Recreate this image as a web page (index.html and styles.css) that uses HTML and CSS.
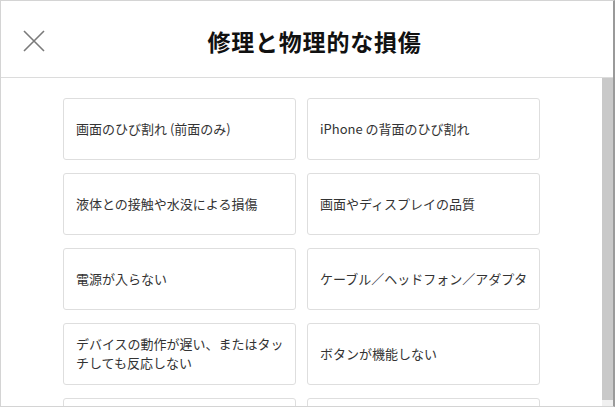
FILE: index.html
```html
<!DOCTYPE html>
<html lang="ja">
<head>
<meta charset="utf-8">
<link rel="stylesheet" href="styles.css">
</head>
<body>
<div class="frame">
  <header class="header">
    <button class="close" aria-label="閉じる">
      <svg width="22" height="22" viewBox="0 0 22 22"><path d="M1 1L21 21M21 1L1 21" stroke="#7a7a7a" stroke-width="1.6" fill="none"/></svg>
    </button>
    <h1 class="title">修理と物理的な損傷</h1>
  </header>
  <div class="body">
    <div class="content">
      <div class="grid">
        <div class="card">画面のひび割れ (前面のみ)</div>
        <div class="card">iPhone の背面のひび割れ</div>
        <div class="card">液体との接触や水没による損傷</div>
        <div class="card">画面やディスプレイの品質</div>
        <div class="card">電源が入らない</div>
        <div class="card">ケーブル／ヘッドフォン／アダプタ</div>
        <div class="card">デバイスの動作が遅い、またはタッチしても反応しない</div>
        <div class="card">ボタンが機能しない</div>
        <div class="card"></div>
        <div class="card"></div>
      </div>
    </div>
    <div class="scrollbar"><div class="thumb"></div></div>
  </div>
</div>
</body>
</html>
```
FILE: styles.css
```css
html, body {
  margin: 0;
  padding: 0;
  background: #fff;
}
body {
  width: 615px;
  height: 408px;
  overflow: hidden;
  font-family: "Noto Sans CJK JP", "Liberation Sans", sans-serif;
  color: #333;
}
.frame {
  box-sizing: border-box;
  width: 615px;
  height: 407px;
  border: 1px solid #d4d4d4;
  border-right: 2px solid #9a9a9a;
  display: flex;
  flex-direction: column;
  overflow: hidden;
}
.header {
  flex: 0 0 auto;
  height: 76px;
  border-bottom: 1px solid #dcdcdc;
  display: flex;
  align-items: center;
  justify-content: center;
  position: relative;
  padding-left: 15px;
}
.close {
  position: absolute;
  left: 22px;
  top: 29px;
  width: 22px;
  height: 22px;
  padding: 0;
  border: 0;
  background: none;
  display: block;
}
.close svg { display: block; }
.title {
  margin: 0;
  font-size: 23px;
  font-weight: 700;
  color: #111;
  letter-spacing: 0.8px;
  line-height: 30px;
  padding-top: 3px;
}
.body {
  flex: 1 1 auto;
  display: flex;
  min-height: 0;
}
.content {
  flex: 1 1 auto;
  overflow: hidden;
  padding-top: 20px;
  display: flex;
  justify-content: center;
}
.grid {
  display: grid;
  grid-template-columns: 233px 233px;
  grid-auto-rows: 62px;
  column-gap: 11px;
  row-gap: 13px;
  align-content: start;
}
.card {
  box-sizing: border-box;
  border: 1px solid #dedede;
  border-radius: 3px;
  padding: 0 10px 2px 12px;
  display: flex;
  align-items: center;
  font-size: 13px;
  line-height: 19px;
  color: #333;
}
.scrollbar {
  flex: 0 0 11px;
  background: #f0f0f0;
  display: flex;
  padding-bottom: 6px;
}
.thumb {
  flex: 1;
  background: #c9c9c9;
}
```
